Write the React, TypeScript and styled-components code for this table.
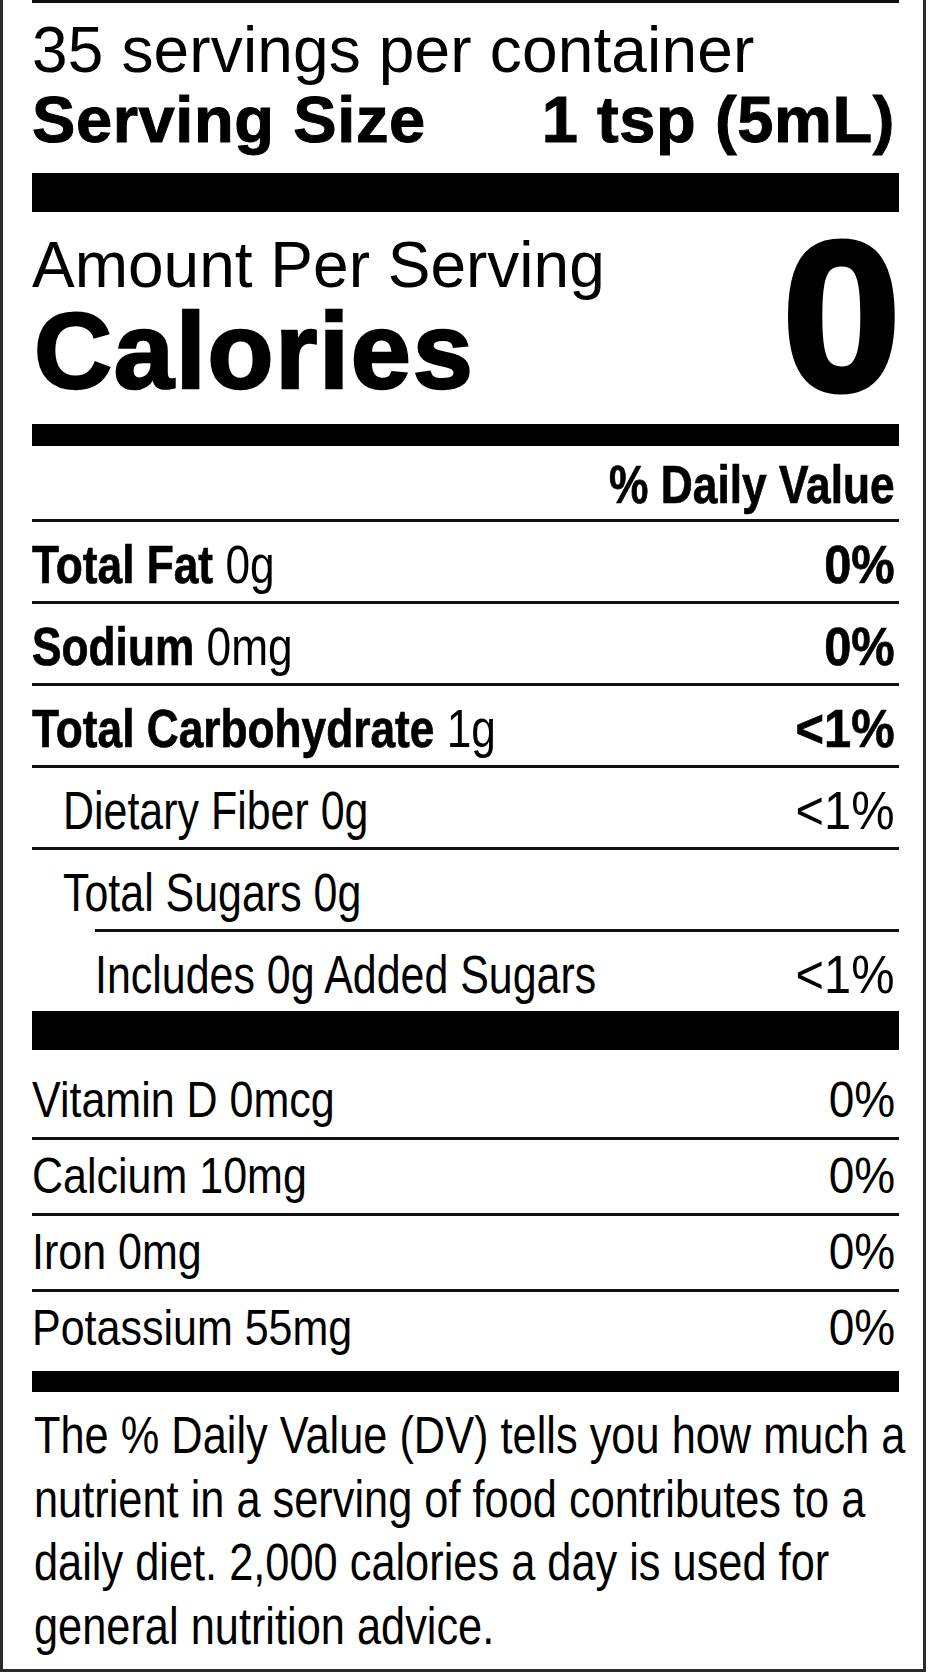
import React from "react";
import styled, { createGlobalStyle } from "styled-components";

const SANS = `"Liberation Sans", Arial, Helvetica, sans-serif`;

const GlobalStyle = createGlobalStyle`
  html, body {
    margin: 0;
    padding: 0;
    background: #fff;
  }
  body {
    font-family: ${SANS};
    color: #000;
  }
`;

const Label = styled.div`
  box-sizing: border-box;
  width: 926px;
  border: 3px solid #2a2a2a;
  border-top: none;
  padding: 0 24px 11px 29px;
  background: #fff;
  overflow: hidden;
`;

/* Condensed type: the label's Helvetica Condensed is drawn by narrowing the sans face. */
const Squeeze = styled.span<{ $origin?: "left" | "right"; $scale?: number }>`
  display: inline-block;
  white-space: nowrap;
  transform: scaleX(${(p) => p.$scale ?? 0.81});
  transform-origin: ${(p) => p.$origin ?? "left"} center;
`;

const Top = styled.section`
  border-top: 3px solid #111;
  padding: 12px 0 18px;
`;

const ServingsLine = styled.div`
  font-size: 64px;
  line-height: 70px;
  letter-spacing: 0.15px;
  white-space: nowrap;
`;

const ServingSize = styled.div`
  display: flex;
  justify-content: space-between;
  padding-right: 4px;
  font-weight: 700;
  font-size: 65px;
  line-height: 70px;
  letter-spacing: 0.6px;
  white-space: nowrap;
  -webkit-text-stroke: 1px #000;
`;

const Bar = styled.div<{ $h: number }>`
  height: ${(p) => p.$h}px;
  background: #000;
`;

const CalBlock = styled.section`
  box-sizing: border-box;
  height: 212px;
  display: flex;
  justify-content: space-between;
  align-items: flex-start;
  padding: 18px 0 23px 0;
`;

const CalLeft = styled.div`
  display: flex;
  flex-direction: column;
`;

const AmountText = styled.div`
  font-size: 64px;
  line-height: 70px;
  white-space: nowrap;
`;

const CaloriesText = styled.div`
  font-size: 108px;
  font-weight: 700;
  line-height: 101px;
  padding-left: 2px;
  letter-spacing: 1.8px;
  -webkit-text-stroke: 2.5px #000;
`;

const CalValue = styled.div`
  font-size: 214px;
  font-weight: 700;
  line-height: 172px;
  -webkit-text-stroke: 5px #000;
  margin-right: -2px;
`;

const DVHeader = styled.div`
  box-sizing: border-box;
  height: 73px;
  padding: 9px 4px 5px 0;
  text-align: right;
  font-weight: 700;
  font-size: 53px;
  line-height: 59px;
  -webkit-text-stroke: 0.7px #000;
`;

const Row = styled.div<{ $indent?: number; $inset?: number }>`
  box-sizing: border-box;
  height: 82px;
  display: flex;
  justify-content: space-between;
  border-top: 3px solid #111;
  margin-left: ${(p) => p.$inset ?? 0}px;
  padding: 13px 4px 7px ${(p) => p.$indent ?? 0}px;
  font-size: 53px;
  line-height: 59px;
  white-space: nowrap;
`;

const Strong = styled.span`
  font-weight: 700;
  -webkit-text-stroke: 0.7px #000;
`;

const Value = styled(Squeeze)<{ $bold?: boolean }>`
  font-weight: ${(p) => (p.$bold ? 700 : 400)};
  -webkit-text-stroke: ${(p) => (p.$bold ? "0.7px #000" : "0")};
`;

const Vitamins = styled.section`
  padding: 14px 0 6px;
`;

const VitRow = styled.div<{ $first?: boolean }>`
  box-sizing: border-box;
  height: ${(p) => (p.$first ? 73 : 76)}px;
  display: flex;
  justify-content: space-between;
  border-top: ${(p) => (p.$first ? "none" : "3px solid #111")};
  padding: 7px 4px 8px 0;
  font-size: 50px;
  line-height: 58px;
  white-space: nowrap;
`;

const Footer = styled.div`
  padding: 12px 0 0 2px;
  font-size: 51px;
  line-height: 63.5px;
`;

const FooterLine = styled(Squeeze)`
  display: block;
`;

type Nutrient = {
  bold?: string;
  rest: string;
  value?: string;
  boldValue?: boolean;
  indent?: number;
  inset?: number;
};

const nutrients: Nutrient[] = [
  { bold: "Total Fat", rest: " 0g", value: "0%", boldValue: true },
  { bold: "Sodium", rest: " 0mg", value: "0%", boldValue: true },
  { bold: "Total Carbohydrate", rest: " 1g", value: "<1%", boldValue: true },
  { rest: "Dietary Fiber 0g", value: "<1%", indent: 31 },
  { rest: "Total Sugars 0g", indent: 31 },
  { rest: "Includes 0g Added Sugars", value: "<1%", inset: 63 },
];

const vitamins = [
  { name: "Vitamin D 0mcg", value: "0%" },
  { name: "Calcium 10mg", value: "0%" },
  { name: "Iron 0mg", value: "0%" },
  { name: "Potassium 55mg", value: "0%" },
];

const footerLines = [
  "The % Daily Value (DV) tells you how much a",
  "nutrient in a serving of food contributes to a",
  "daily diet. 2,000 calories a day is used for",
  "general nutrition advice.",
];

export default function App() {
  return (
    <>
      <GlobalStyle />
      <Label>
        <Top>
          <ServingsLine>35 servings per container</ServingsLine>
          <ServingSize>
            <span>Serving Size</span>
            <span>1 tsp (5mL)</span>
          </ServingSize>
        </Top>
        <Bar $h={39} />
        <CalBlock>
          <CalLeft>
            <AmountText>Amount Per Serving</AmountText>
            <CaloriesText>Calories</CaloriesText>
          </CalLeft>
          <CalValue>0</CalValue>
        </CalBlock>
        <Bar $h={22} />
        <DVHeader>
          <Squeeze $origin="right" $scale={0.836}>
            % Daily Value
          </Squeeze>
        </DVHeader>
        {nutrients.map((n, i) => (
          <Row key={i} $indent={n.indent} $inset={n.inset}>
            <Squeeze $origin="left" $scale={n.bold ? 0.835 : 0.81}>
              {n.bold && <Strong>{n.bold}</Strong>}
              {n.rest}
            </Squeeze>
            {n.value && (
              <Value $origin="right" $scale={0.92} $bold={n.boldValue}>
                {n.value}
              </Value>
            )}
          </Row>
        ))}
        <Bar $h={39} />
        <Vitamins>
          {vitamins.map((v, i) => (
            <VitRow key={v.name} $first={i === 0}>
              <Squeeze $origin="left" $scale={0.86}>
                {v.name}
              </Squeeze>
              <Squeeze $origin="right" $scale={0.92}>
                {v.value}
              </Squeeze>
            </VitRow>
          ))}
        </Vitamins>
        <Bar $h={21} />
        <Footer>
          {footerLines.map((line) => (
            <FooterLine key={line} $scale={0.85}>
              {line}
            </FooterLine>
          ))}
        </Footer>
      </Label>
    </>
  );
}
